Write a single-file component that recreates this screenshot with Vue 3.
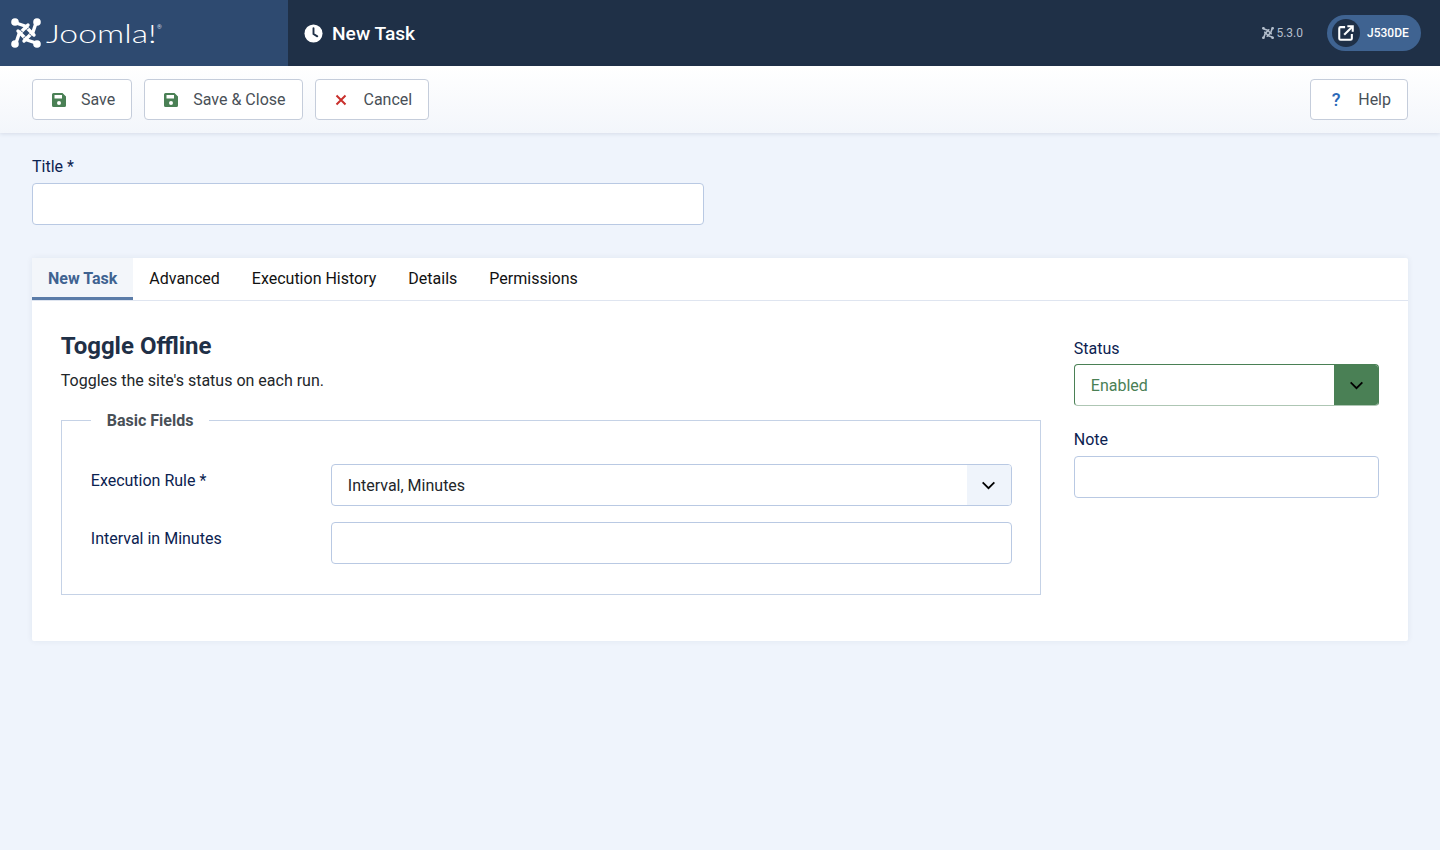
<template>
  <div class="page">
    <header class="topbar">
      <div class="brand">
        <svg class="brand-mark" viewBox="0 0 30 30" fill="none">
          <g stroke="#fff" stroke-width="3.4" stroke-linecap="round" stroke-linejoin="round">
            <path v-for="band in bands" :key="band" :d="band" />
          </g>
          <g fill="#fff">
            <circle cx="4" cy="4" r="3.8" />
            <circle cx="26" cy="4" r="3.8" />
            <circle cx="4" cy="26" r="3.8" />
            <circle cx="26" cy="26" r="3.8" />
          </g>
          <path d="M18.3 15.7 L20.3 17.7 M14.3 18.3 L12.3 20.3 M11.7 14.3 L9.7 12.3 M15.7 11.7 L17.7 9.7" stroke="#2e4a70" stroke-width="1" />
        </svg>
        <span class="brand-name">Joomla!</span>
        <sup class="brand-reg">®</sup>
      </div>
      <div class="page-title">
        <svg class="title-icon" viewBox="0 0 20 20">
          <circle cx="10" cy="10" r="9.5" fill="#fff" />
          <path d="M10 4.5 V10.5 L14 13" fill="none" stroke="#1f3047" stroke-width="2" stroke-linecap="round" />
        </svg>
        <h1>New Task</h1>
      </div>
      <div class="version">
        <svg class="version-icon" viewBox="0 0 30 30" fill="none" stroke="#b4bfcd" stroke-width="4" stroke-linecap="round" stroke-linejoin="round">
          <path v-for="band in bands" :key="band" :d="band" />
          <path d="M3 3 h1 M27 3 h-1 M3 27 h1 M27 27 h-1" stroke-width="6" />
        </svg>
        <span>5.3.0</span>
      </div>
      <a class="site-link">
        <span class="site-icon">
          <svg viewBox="0 0 20 20" fill="none" stroke="#fff" stroke-width="2.3">
            <path d="M9 3.5 H4 A1.5 1.5 0 0 0 2.5 5 V16 A1.5 1.5 0 0 0 4 17.5 H15 A1.5 1.5 0 0 0 16.5 16 V11" />
            <path d="M8 12 L17 3" />
            <path d="M11.5 2.5 H17.5 V8.5" />
          </svg>
        </span>
        <span class="site-name">J530DE</span>
      </a>
    </header>

    <div class="toolbar">
      <button class="btn">
        <svg class="btn-icon" viewBox="0 0 14 14">
          <path fill="#4a8055" fill-rule="evenodd" d="M1.5 0 H10.5 L14 3.5 V12.5 A1.5 1.5 0 0 1 12.5 14 H1.5 A1.5 1.5 0 0 1 0 12.5 V1.5 A1.5 1.5 0 0 1 1.5 0 Z M2.5 2 V5.5 H10 V2 Z M7 8 A2 2 0 1 0 7 12 A2 2 0 1 0 7 8 Z" />
        </svg>
        Save
      </button>
      <button class="btn">
        <svg class="btn-icon" viewBox="0 0 14 14">
          <path fill="#4a8055" fill-rule="evenodd" d="M1.5 0 H10.5 L14 3.5 V12.5 A1.5 1.5 0 0 1 12.5 14 H1.5 A1.5 1.5 0 0 1 0 12.5 V1.5 A1.5 1.5 0 0 1 1.5 0 Z M2.5 2 V5.5 H10 V2 Z M7 8 A2 2 0 1 0 7 12 A2 2 0 1 0 7 8 Z" />
        </svg>
        Save &amp; Close
      </button>
      <button class="btn">
        <svg class="btn-icon cancel" viewBox="0 0 12 12">
          <path d="M1.5 1.5 L10.5 10.5 M10.5 1.5 L1.5 10.5" stroke="#c9302c" stroke-width="2" fill="none" />
        </svg>
        Cancel
      </button>
      <button class="btn help">
        <span class="help-icon">?</span>
        Help
      </button>
    </div>

    <main class="content">
      <div class="title-field">
        <label class="field-label">Title *</label>
        <input class="input" type="text" />
      </div>

      <section class="card">
        <nav class="tabs">
          <a v-for="(tab, i) in tabs" :key="tab" class="tab" :class="{ active: i === 0 }">{{ tab }}</a>
        </nav>
        <div class="tab-body">
          <div class="main-col">
            <h2>Toggle Offline</h2>
            <p class="desc">Toggles the site's status on each run.</p>
            <fieldset class="fields">
              <legend>Basic Fields</legend>
              <div class="row">
                <label class="field-label">Execution Rule *</label>
                <div class="select-wrap">
                  <select class="input select">
                    <option>Interval, Minutes</option>
                  </select>
                  <span class="arrow">
                    <svg viewBox="0 0 16 10" fill="none" stroke="#000" stroke-width="2">
                      <path d="M1.5 1.5 L8 8 L14.5 1.5" />
                    </svg>
                  </span>
                </div>
              </div>
              <div class="row">
                <label class="field-label">Interval in Minutes</label>
                <input class="input" type="text" />
              </div>
            </fieldset>
          </div>
          <aside class="side-col">
            <div class="side-field">
              <label class="field-label">Status</label>
              <div class="select-wrap">
                <select class="input select enabled">
                  <option>Enabled</option>
                </select>
                <span class="arrow green">
                  <svg viewBox="0 0 16 10" fill="none" stroke="#000" stroke-width="2">
                    <path d="M1.5 1.5 L8 8 L14.5 1.5" />
                  </svg>
                </span>
              </div>
            </div>
            <div class="side-field note">
              <label class="field-label">Note</label>
              <input class="input" type="text" />
            </div>
          </aside>
        </div>
      </section>
    </main>
  </div>
</template>

<script setup>
const tabs = ['New Task', 'Advanced', 'Execution History', 'Details', 'Permissions']

// the four woven arms of the logo
const bands = [
  'M5 5 L14 8 L23 17',
  'M25 5 L22 14 L13 23',
  'M25 25 L16 22 L7 13',
  'M5 25 L8 16 L17 7'
]
</script>

<style>
body {
  background: #eff4fc;
}
</style>

<style scoped>
.page {
  min-height: 850px;
  background: #eff4fc;
  font-family: Roboto, "Liberation Sans", sans-serif;
  font-size: 16px;
  color: #22262a;
}

/* header */
.topbar {
  display: flex;
  align-items: center;
  height: 66px;
  background: #1f3047;
  color: #fff;
}

.brand {
  display: flex;
  align-items: center;
  width: 288px;
  height: 100%;
  padding-left: 11px;
  box-sizing: border-box;
  background: #2e4a70;
}

.brand-mark {
  width: 30px;
  height: 30px;
  margin-right: 5px;
}

.brand-name {
  display: inline-block;
  width: 110px;
  font-family: Lato, sans-serif;
  font-weight: 300;
  font-size: 26px;
  line-height: 1;
  white-space: nowrap;
  transform: scaleX(1.3);
  transform-origin: left center;
}

.brand-reg {
  margin: -12px 0 0 1px;
  font-size: 6px;
  line-height: 1;
  color: #d5dce6;
}

.page-title {
  display: flex;
  align-items: center;
  gap: 9px;
  padding-left: 16px;
  flex: 1;
}

.title-icon {
  width: 19px;
  height: 19px;
}

h1 {
  margin: 0;
  font-size: 19.2px;
  font-weight: 500;
}

.version {
  display: flex;
  align-items: center;
  gap: 2px;
  font-size: 12px;
  color: #b4bfcd;
  margin-right: 24px;
}

.version-icon {
  width: 12px;
  height: 12px;
}

.site-link {
  display: flex;
  align-items: center;
  width: 94px;
  height: 36px;
  margin-right: 19px;
  border-radius: 18px;
  background: #3f6391;
}

.site-icon {
  display: flex;
  align-items: center;
  justify-content: center;
  width: 28px;
  height: 28px;
  margin-left: 5px;
  border-radius: 50%;
  background: #1f3047;
}

.site-icon svg {
  width: 18px;
  height: 18px;
}

.site-name {
  margin-left: 7px;
  font-size: 12px;
  font-weight: 500;
}

/* toolbar */
.toolbar {
  display: flex;
  gap: 12px;
  height: 67px;
  padding: 13px 32px;
  box-sizing: border-box;
  background: linear-gradient(#fff, #f3f6fb);
  box-shadow: 0 1px 4px rgba(30, 50, 90, 0.12);
}

.btn {
  display: flex;
  align-items: center;
  height: 41px;
  padding: 0 16px;
  border: 1px solid #c5cddb;
  border-radius: 4px;
  background: #fff;
  font-family: inherit;
  font-size: 16px;
  color: #495057;
}

.btn-icon {
  width: 14px;
  height: 14px;
  margin-right: 15px;
  margin-left: 3px;
}

.btn-icon.cancel {
  width: 12px;
  height: 12px;
  margin-left: 3px;
  margin-right: 17px;
}

.help {
  margin-left: auto;
}

.help-icon {
  width: 14px;
  margin-left: 2px;
  margin-right: 15px;
  color: #2a69b8;
  font-weight: 500;
  font-size: 18px;
  text-align: center;
}

/* form */
.content {
  padding: 24px 32px 0;
}

.field-label {
  display: block;
  font-size: 16px;
  line-height: 19px;
  color: #0b2250;
}

.input {
  display: block;
  width: 100%;
  height: 42px;
  padding: 0 16px;
  box-sizing: border-box;
  border: 1px solid #b9c9e3;
  border-radius: 4px;
  background: #fff;
  font-family: inherit;
  font-size: 16px;
  color: #22262a;
}

.title-field {
  width: 672px;
}

.title-field .field-label {
  margin-bottom: 7px;
}

.card {
  margin-top: 33px;
  background: #fff;
  border-radius: 2px;
  box-shadow: 0 0 6px rgba(30, 50, 90, 0.07);
}

.tabs {
  display: flex;
  height: 43px;
  box-sizing: border-box;
  border-bottom: 1px solid #dfe5f0;
}

.tab {
  height: 42px;
  padding: 0 16px;
  box-sizing: border-box;
  line-height: 41px;
  color: #111;
}

.tab.active {
  border-bottom: 3px solid #5b7ca8;
  background: #f3f6fa;
  color: #3f6391;
  font-weight: 700;
}

.tab-body {
  display: grid;
  grid-template-columns: 980.5px 305.4px;
  gap: 32.5px;
  padding: 30px 28.8px 46px;
}

h2 {
  margin: 0;
  font-size: 24px;
  line-height: 30px;
  font-weight: 700;
  color: #1f3047;
}

.desc {
  margin: 10px 0 0;
  line-height: 20px;
}

.fields {
  margin: 18px 0 0;
  padding: 33px 29px 30px;
  border: 1px solid #c5d2e6;
  min-width: 0;
}

legend {
  margin-left: 0;
  padding: 2px 16px 0;
  font-weight: 700;
  line-height: 20px;
  color: #495057;
}

.row {
  display: grid;
  grid-template-columns: 240px 681px;
  margin-bottom: 16px;
}

.row:last-child {
  margin-bottom: 0;
}

.row .field-label {
  padding-top: 7px;
}

.select-wrap {
  position: relative;
}

.select {
  appearance: none;
}

.select.enabled {
  border-color: #4a8055;
  border-bottom-color: #aec6b4;
  color: #4a8055;
}

.arrow {
  position: absolute;
  top: 1px;
  right: 1px;
  bottom: 1px;
  display: flex;
  align-items: center;
  justify-content: center;
  width: 44px;
  background: #eff4fb;
  border-radius: 0 3px 3px 0;
  pointer-events: none;
}

.arrow.green {
  background: #4a8055;
}

.arrow svg {
  width: 15px;
  height: 9px;
}

.side-col {
  padding-top: 8px;
}

.side-field .field-label {
  margin-bottom: 6px;
}

.side-field.note {
  margin-top: 24px;
}

.side-field.note .field-label {
  margin-bottom: 7px;
}
</style>
